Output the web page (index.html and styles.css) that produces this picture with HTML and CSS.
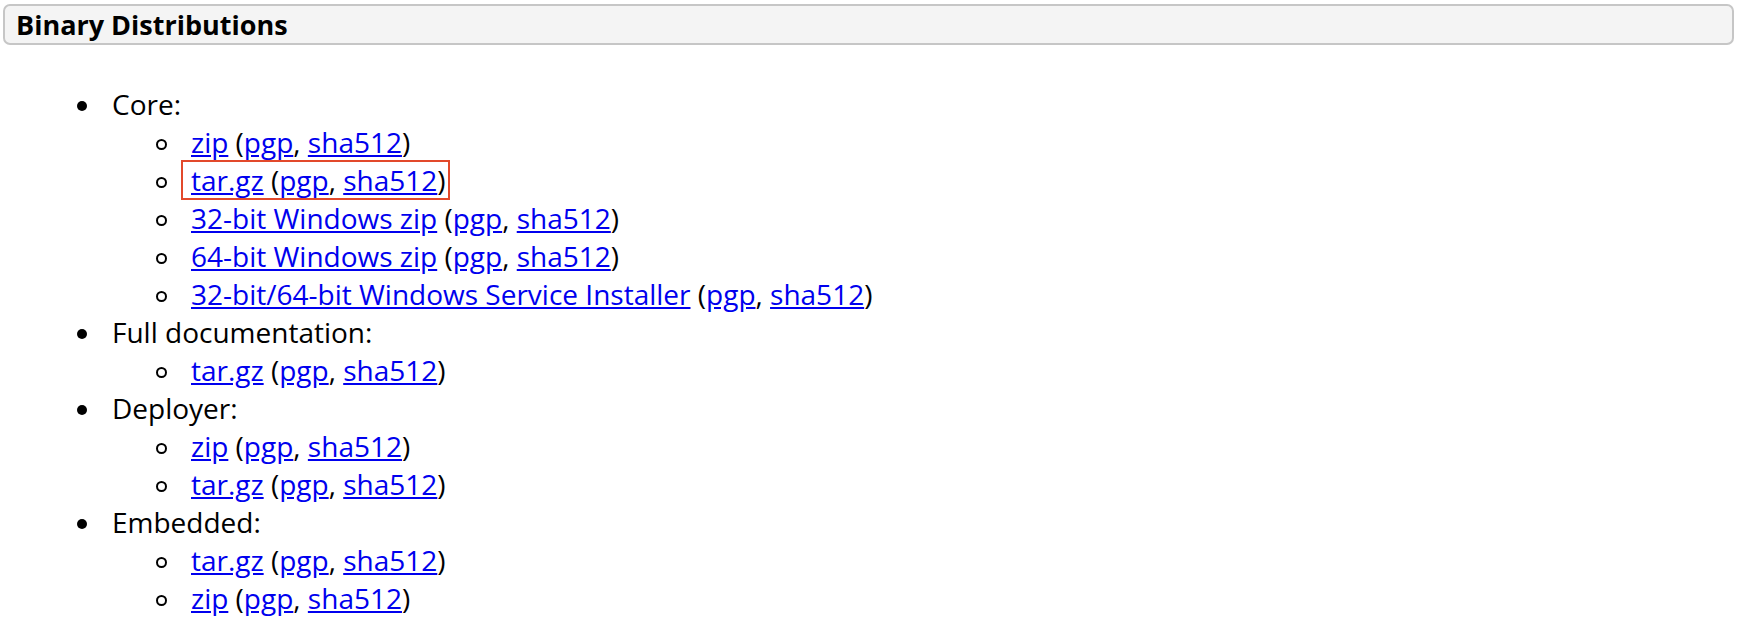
FILE: index.html
```html
<!DOCTYPE html>
<html>
<head>
<meta charset="utf-8">
<link rel="stylesheet" href="styles.css">
</head>
<body>
<h2 class="section-title">Binary Distributions</h2>
<ul class="dist-list">
  <li class="item">Core:
    <ul class="sub-list">
      <li class="sub-item"><a href="#">zip</a> (<a href="#">pgp</a>, <a href="#">sha512</a>)</li>
      <li class="sub-item"><span class="highlight"><a href="#">tar.gz</a> (<a href="#">pgp</a>, <a href="#">sha512</a>)</span></li>
      <li class="sub-item"><a href="#">32-bit Windows zip</a> (<a href="#">pgp</a>, <a href="#">sha512</a>)</li>
      <li class="sub-item"><a href="#">64-bit Windows zip</a> (<a href="#">pgp</a>, <a href="#">sha512</a>)</li>
      <li class="sub-item"><a href="#">32-bit/64-bit Windows Service Installer</a> (<a href="#">pgp</a>, <a href="#">sha512</a>)</li>
    </ul>
  </li>
  <li class="item">Full documentation:
    <ul class="sub-list">
      <li class="sub-item"><a href="#">tar.gz</a> (<a href="#">pgp</a>, <a href="#">sha512</a>)</li>
    </ul>
  </li>
  <li class="item">Deployer:
    <ul class="sub-list">
      <li class="sub-item"><a href="#">zip</a> (<a href="#">pgp</a>, <a href="#">sha512</a>)</li>
      <li class="sub-item"><a href="#">tar.gz</a> (<a href="#">pgp</a>, <a href="#">sha512</a>)</li>
    </ul>
  </li>
  <li class="item">Embedded:
    <ul class="sub-list">
      <li class="sub-item"><a href="#">tar.gz</a> (<a href="#">pgp</a>, <a href="#">sha512</a>)</li>
      <li class="sub-item"><a href="#">zip</a> (<a href="#">pgp</a>, <a href="#">sha512</a>)</li>
    </ul>
  </li>
</ul>
</body>
</html>
```
FILE: styles.css
```css
html, body {
  margin: 0;
  padding: 0;
  background: #ffffff;
}
body {
  font-family: "Open Sans", "Noto Sans", sans-serif;
  color: #000000;
}
.section-title {
  margin: 4px 5px 0 3px;
  height: 37px;
  line-height: 37px;
  padding: 0 0 0 11px;
  background: #f4f4f4;
  border: 2px solid #c6c6c6;
  border-radius: 7px;
  font-size: 27px;
  font-weight: 700;
}
.dist-list {
  margin: 40px 0 0 0;
  padding: 0 0 0 112px;
  font-size: 28px;
  line-height: 38px;
  list-style: none;
}
.sub-list {
  margin: 0;
  padding: 0 0 0 79px;
  list-style: none;
}
.item::before {
  content: "";
  display: inline-block;
  width: 10px;
  height: 10px;
  margin-left: -35px;
  margin-right: 25px;
  border-radius: 50%;
  background: #000000;
  vertical-align: 4px;
}
.sub-item::before {
  content: "";
  display: inline-block;
  box-sizing: border-box;
  width: 11px;
  height: 11px;
  margin-left: -35px;
  margin-right: 24px;
  border-radius: 50%;
  border: 2px solid #000000;
  vertical-align: 3px;
}
a {
  color: #0000ee;
  text-decoration: underline;
}
.highlight {
  position: relative;
}
.highlight::after {
  content: "";
  position: absolute;
  left: -10px;
  right: -4px;
  top: -1px;
  bottom: -1px;
  border: 2px solid #e2492b;
  pointer-events: none;
}
```
